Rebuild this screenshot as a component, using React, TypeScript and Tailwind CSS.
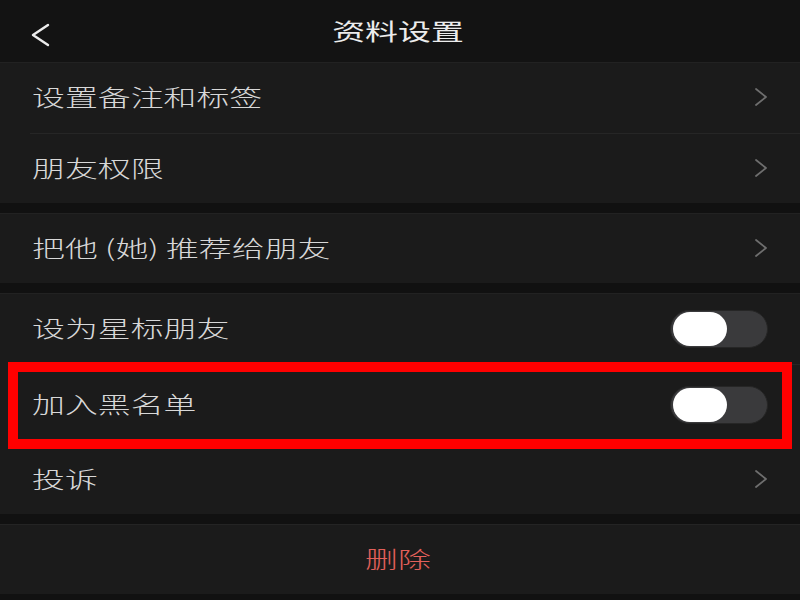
import React from "react";

const font = { fontFamily: '"Noto Sans CJK SC", "Noto Sans", sans-serif' };

function Chevron() {
  return (
    <svg width="14" height="20" viewBox="0 0 14 20" className="shrink-0 -mt-[2px]">
      <polyline points="2,2 12,10 2,18" fill="none" stroke="#6e6e6e" strokeWidth="1.8" strokeLinecap="round" strokeLinejoin="round" />
    </svg>
  );
}

function Toggle() {
  return (
    <div className="w-[98px] h-[38px] rounded-full bg-[#3a3a3c] border border-[#262626] flex items-center pl-[2px] shrink-0">
      <div className="w-[54px] h-[34px] rounded-full bg-white" />
    </div>
  );
}

function Label({ children }: { children: React.ReactNode }) {
  return (
    <span className="inline-block origin-left scale-x-[1.43] text-[23px] font-light leading-none text-[#d8d8d8] whitespace-pre -mt-[3px]">
      {children}
    </span>
  );
}

function Row({ label, right, h = "h-[70px]" }: { label: string; right: React.ReactNode; h?: string }) {
  return (
    <div className={`${h} flex items-center justify-between pl-[32px] pr-[32px] bg-[#1b1b1b]`}>
      <Label>{label}</Label>
      {right}
    </div>
  );
}

function Sep() {
  return (
    <div className="h-px bg-[#1b1b1b] pl-[30px]">
      <div className="h-px bg-[#262626]" />
    </div>
  );
}

export default function App() {
  return (
    <div className="relative w-[800px] h-[600px] bg-[#111111] overflow-hidden" style={font}>
      <div className="h-[62px] relative flex items-center justify-center bg-[#131313]">
        <svg width="24" height="26" viewBox="0 0 24 26" className="absolute left-[28px] top-[22px]">
          <polyline points="20,3 5,13 20,23" fill="none" stroke="#ececec" strokeWidth="2.4" strokeLinecap="round" strokeLinejoin="round" />
        </svg>
        <span className="inline-block origin-center scale-x-[1.43] text-[23px] leading-none text-[#ececec] -translate-x-[2px] -mt-[2px]">资料设置</span>
      </div>

      <div className="border-t border-[#222]">
        <Row label="设置备注和标签" right={<Chevron />} h="h-[70px]" />
        <Sep />
        <Row label="朋友权限" right={<Chevron />} h="h-[69px]" />
      </div>

      <div className="mt-[10px] border-t border-[#222]">
        <Row label="把他 (她) 推荐给朋友" right={<Chevron />} h="h-[69px]" />
      </div>

      <div className="mt-[10px] border-t border-[#222]">
        <Row label="设为星标朋友" right={<Toggle />} h="h-[70px]" />
        <Sep />
        <Row label="加入黑名单" right={<Toggle />} h="h-[80px]" />
        <Row label="投诉" right={<Chevron />} h="h-[69px]" />
      </div>

      <div className="mt-[10px] border-t border-[#242424] h-[70px] bg-[#1b1b1b] flex items-center justify-center">
        <span className="inline-block origin-center scale-x-[1.43] text-[23px] font-light leading-none text-[#e2605a] -translate-x-[2px] -mt-[3px]">删除</span>
      </div>

      <div className="absolute left-[8px] top-[362px] w-[784px] h-[87px] border-[10px] border-[#ff0000] pointer-events-none" />
    </div>
  );
}
